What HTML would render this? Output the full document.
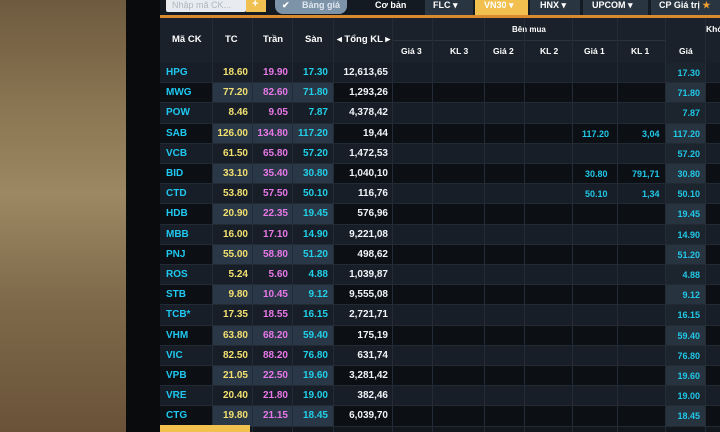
<!DOCTYPE html><html><head><style>
*{margin:0;padding:0;box-sizing:border-box}
body{width:720px;height:432px;overflow:hidden;position:relative;background:#0b0e12;font-family:"Liberation Sans",sans-serif;font-weight:bold}
.bg{position:absolute;left:0;top:0;width:126px;height:432px;background:linear-gradient(180deg,#6e5a3e 0%,#8a7652 25%,#9c8862 45%,#7e6a4a 70%,#6a5238 100%)}
.bez{position:absolute;left:126px;top:0;width:34px;height:432px;background:#0a0b0d}
.a{position:absolute;font-size:9px;white-space:nowrap}
.r{position:absolute;left:160px;width:560px;height:20.2px}
.c{position:absolute;top:0;height:100%;font-size:10px;line-height:20px;white-space:nowrap}
.v{position:absolute;top:18px;width:1px;height:414px;background:#222b36}
</style></head><body>
<div class="bg"></div><div class="bez"></div>
<div style="position:absolute;left:160px;top:0;width:560px;height:432px;background:#12171e"></div>
<div style="position:absolute;left:160px;top:0;width:560px;height:15px;background:#141a22"></div>
<div style="position:absolute;left:166px;top:0;width:80px;height:12px;background:#e8ecf0;border-radius:0 0 2px 2px"></div>
<div class="a" style="left:172px;top:0;color:#b0b6bc;font-weight:normal">Nhập mã CK...</div>
<div style="position:absolute;left:246px;top:0;width:20px;height:12px;background:#f0c050"></div>
<div class="a" style="left:252px;top:-2px;color:#fff;font-size:11px">+</div>
<div style="position:absolute;left:275px;top:0;width:72px;height:14px;background:#7d93a8;border-radius:0 0 8px 8px"></div>
<div class="a" style="left:282px;top:0;color:#fff">✔</div>
<div class="a" style="left:302px;top:0;color:#e0e8f0">Bảng giá</div>
<div class="a" style="left:375px;top:0;color:#fff">Cơ bản</div>
<div style="position:absolute;left:425px;top:0;width:48px;height:15px;background:#2a3542"></div>
<div class="a" style="left:433px;top:0;color:#fff">FLC ▾</div>
<div style="position:absolute;left:475px;top:0;width:53px;height:16px;background:#f2c04e"></div>
<div class="a" style="left:484px;top:0;color:#fff">VN30 ▾</div>
<div style="position:absolute;left:530px;top:0;width:50px;height:15px;background:#2a3542"></div>
<div class="a" style="left:540px;top:0;color:#fff">HNX ▾</div>
<div style="position:absolute;left:583px;top:0;width:65px;height:15px;background:#2a3542"></div>
<div class="a" style="left:592px;top:0;color:#fff">UPCOM ▾</div>
<div style="position:absolute;left:651px;top:0;width:69px;height:15px;background:#2a3542"></div>
<div class="a" style="left:659px;top:0;color:#fff">CP Giá trị <span style="color:#f0a030">★</span></div>
<div style="position:absolute;left:160px;top:15px;width:560px;height:3px;background:#d88a30"></div>
<div style="position:absolute;left:160px;top:18px;width:560px;height:45px;background:#1a212a"></div>
<div class="a" style="left:172px;top:34px;color:#fff;font-size:9.5px">Mã CK</div>
<div class="a" style="left:225px;top:34px;color:#fff;font-size:9.5px">TC</div>
<div class="a" style="left:263px;top:34px;color:#fff;font-size:9.5px">Trần</div>
<div class="a" style="left:305px;top:34px;color:#fff;font-size:9.5px">Sàn</div>
<div class="a" style="left:337px;top:34px;color:#fff;font-size:9.5px">◂ Tổng KL ▸</div>
<div class="a" style="left:512px;top:25px;color:#fff;font-size:8px">Bên mua</div>
<div style="position:absolute;left:392px;top:40px;width:273px;height:1px;background:#2a333e"></div>
<div class="a" style="left:401px;top:46px;color:#fff;font-size:8.5px">Giá 3</div>
<div class="a" style="left:450px;top:46px;color:#fff;font-size:8.5px">KL 3</div>
<div class="a" style="left:493px;top:46px;color:#fff;font-size:8.5px">Giá 2</div>
<div class="a" style="left:540px;top:46px;color:#fff;font-size:8.5px">KL 2</div>
<div class="a" style="left:584px;top:46px;color:#fff;font-size:8.5px">Giá 1</div>
<div class="a" style="left:631px;top:46px;color:#fff;font-size:8.5px">KL 1</div>
<div class="a" style="left:679px;top:46px;color:#fff;font-size:8.5px">Giá</div>
<div class="a" style="left:706px;top:24px;color:#fff;font-size:8.5px">Khớ</div>
<div id="rows"></div>
<div class="v" style="left:212px"></div><div class="v" style="left:252px"></div><div class="v" style="left:292px"></div><div class="v" style="left:333px"></div><div class="v" style="left:392px"></div><div class="v" style="left:432px"></div><div class="v" style="left:484px"></div><div class="v" style="left:524px"></div><div class="v" style="left:572px"></div><div class="v" style="left:617px"></div><div class="v" style="left:665px"></div><div class="v" style="left:705px"></div>
<div style="position:absolute;left:160px;top:425px;width:90px;height:7px;background:#f2c04e"></div>
<script>
var d=[["HPG","18.60","19.90","17.30","12,613,65"],["MWG","77.20","82.60","71.80","1,293,26"],["POW","8.46","9.05","7.87","4,378,42"],["SAB","126.00","134.80","117.20","19,44"],["VCB","61.50","65.80","57.20","1,472,53"],["BID","33.10","35.40","30.80","1,040,10"],["CTD","53.80","57.50","50.10","116,76"],["HDB","20.90","22.35","19.45","576,96"],["MBB","16.00","17.10","14.90","9,221,08"],["PNJ","55.00","58.80","51.20","498,62"],["ROS","5.24","5.60","4.88","1,039,87"],["STB","9.80","10.45","9.12","9,555,08"],["TCB*","17.35","18.55","16.15","2,721,71"],["VHM","63.80","68.20","59.40","175,19"],["VIC","82.50","88.20","76.80","631,74"],["VPB","21.05","22.50","19.60","3,281,42"],["VRE","20.40","21.80","19.00","382,46"],["CTG","19.80","21.15","18.45","6,039,70"]];
var h="";
d.forEach(function(r,i){var y=63+i*20.2,ev=i%2==1;
h+='<div class="r" style="top:'+y+'px;background:'+(ev?'#0c1015':'#171e27')+';border-bottom:1px solid #222a34">';
if(ev)h+='<div class="c" style="left:52px;width:121px;background:#2a3746"></div>';
h+='<div class="c" style="left:505px;width:40px;background:'+(ev?'#283340':'#1c242e')+'"></div>';
h+='<div class="c" style="left:6px;color:#1ec8f0">'+r[0]+'</div>';
h+='<div class="c" style="right:472px;color:#f2e070">'+r[1]+'</div>';
h+='<div class="c" style="right:432px;color:#e878e8">'+r[2]+'</div>';
h+='<div class="c" style="right:392px;color:#20d0e8">'+r[3]+'</div>';
h+='<div class="c" style="right:332px;color:#f0f4f8">'+r[4]+'</div>';
h+='<div class="c" style="right:20px;color:#20c8e8;font-size:9px">'+r[3]+'</div>';
if(i==3)h+='<div class="c" style="left:422px;color:#20c8e8;font-size:9px">117.20</div><div class="c" style="left:482px;color:#20c8e8;font-size:9px">3,04</div>';
if(i==5)h+='<div class="c" style="left:425px;color:#20c8e8;font-size:9px">30.80</div><div class="c" style="left:472px;color:#20c8e8;font-size:9px">791,71</div>';
if(i==6)h+='<div class="c" style="left:425px;color:#20c8e8;font-size:9px">50.10</div><div class="c" style="left:482px;color:#20c8e8;font-size:9px">1,34</div>';
h+='</div>';});
document.getElementById("rows").innerHTML=h;
</script>
</body></html>
